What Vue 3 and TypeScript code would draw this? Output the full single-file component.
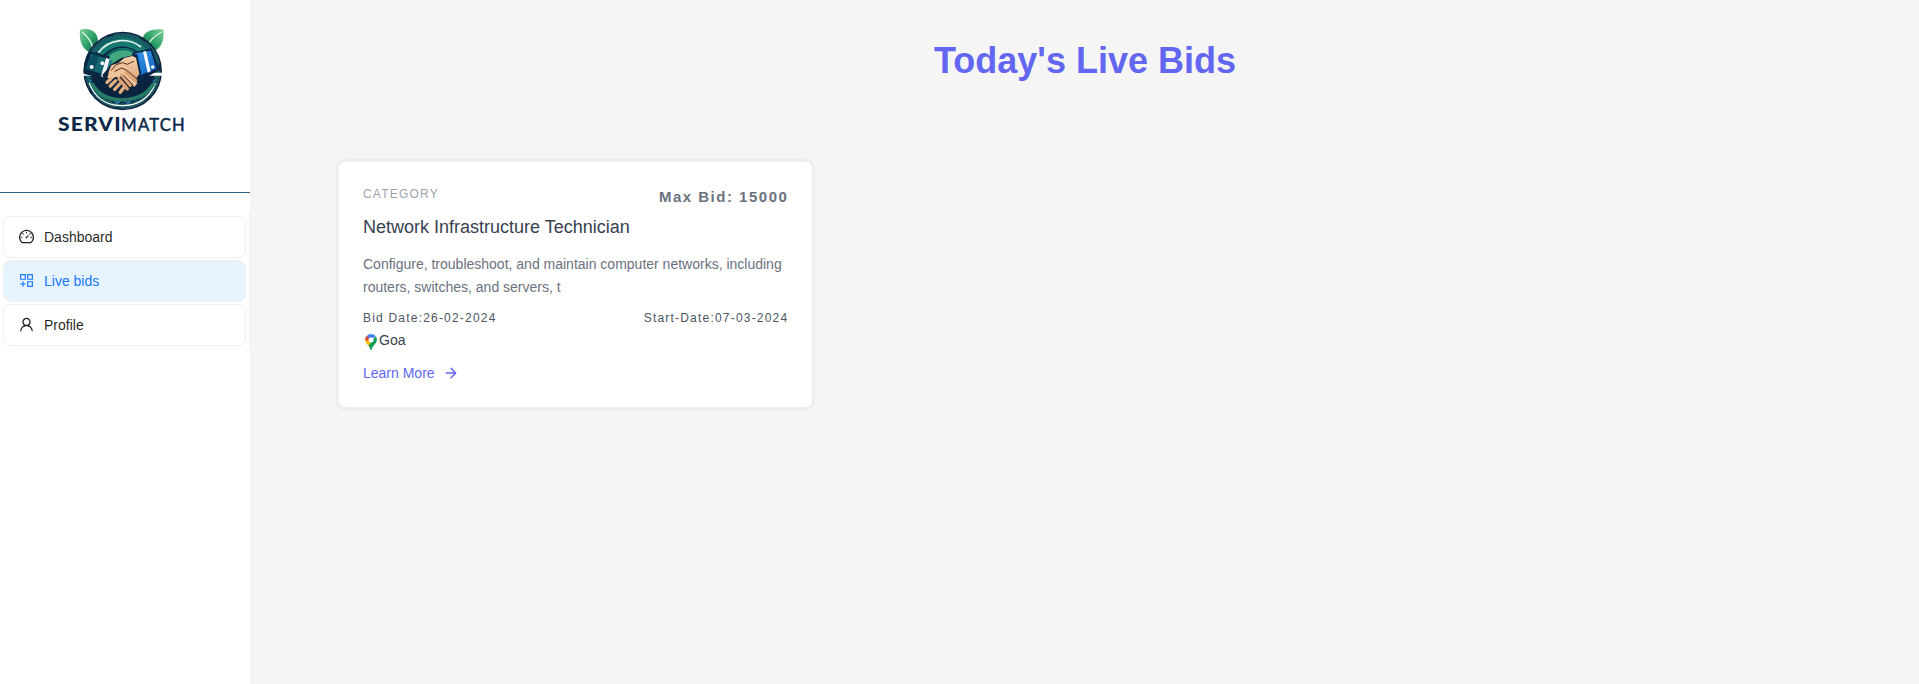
<script setup lang="ts">
interface MenuItem {
  key: string
  label: string
}

interface Bid {
  title: string
  description: string
  maxBid: number
  bidDate: string
  startDate: string
  location: string
}

const menu: MenuItem[] = [
  { key: 'dashboard', label: 'Dashboard' },
  { key: 'bids', label: 'Live bids' },
  { key: 'profile', label: 'Profile' },
]
const activeKey = 'bids'

const bids: Bid[] = [
  {
    title: 'Network Infrastructure Technician',
    description:
      'Configure, troubleshoot, and maintain computer networks, including routers, switches, and servers, t',
    maxBid: 15000,
    bidDate: '26-02-2024',
    startDate: '07-03-2024',
    location: 'Goa',
  },
]
</script>

<template>
  <div class="layout">
    <aside class="sider">
      <div class="brand">
        <svg class="logo" viewBox="0 0 435 360" width="145" height="120">
          <defs>
            <linearGradient id="leafL" x1="0" y1="0" x2="1" y2="1">
              <stop offset="0" stop-color="#7fd09a" />
              <stop offset=".5" stop-color="#2fa368" />
              <stop offset="1" stop-color="#0c5a4c" />
            </linearGradient>
            <linearGradient id="leafR" x1="1" y1="0" x2="0" y2="1">
              <stop offset="0" stop-color="#7fd09a" />
              <stop offset=".5" stop-color="#2fa368" />
              <stop offset="1" stop-color="#0c5a4c" />
            </linearGradient>
            <linearGradient id="ring" x1="0" y1="0" x2="1" y2="1">
              <stop offset="0" stop-color="#14626a" />
              <stop offset="1" stop-color="#1b5c58" />
            </linearGradient>
            <linearGradient id="cuff" x1="0" y1="0" x2="1" y2="1">
              <stop offset="0" stop-color="#3aa0ee" />
              <stop offset="1" stop-color="#0d58b8" />
            </linearGradient>
            <linearGradient id="skin" x1="0" y1="0" x2="0" y2="1">
              <stop offset="0" stop-color="#f5cfab" />
              <stop offset="1" stop-color="#dca57a" />
            </linearGradient>
          </defs>
          <path d="M90 29c28-7 53 3 54 35l-20 34c-28-9-37-34-34-69z" fill="url(#leafL)" />
          <path d="M97 37c18 14 28 28 32 50" fill="none" stroke="#e6f5e8" stroke-width="4" />
          <path d="M340 29c-40-5-64 10-63 36l31 30c26-9 36-35 32-66z" fill="url(#leafR)" />
          <path d="M335 36c-22 11-34 22-41 41" fill="none" stroke="#daf2df" stroke-width="4" />
          <circle cx="218" cy="153" r="118" fill="#0a2440" />
          <circle cx="218" cy="153" r="103" fill="none" stroke="url(#ring)" stroke-width="14" />
          <circle cx="218" cy="153" r="95" fill="none" stroke="#0b2c45" stroke-width="8" stroke-dasharray="11 8" />
          <circle cx="218" cy="153" r="112" fill="none" stroke="#3d7c83" stroke-width="2" stroke-dasharray="80 20" />
          <path d="M139 94a98 98 0 0 1 151-8l-18 17a76 76 0 0 0-115 6z" fill="#177a72" />
          <path d="M145 98a90 90 0 0 1 128-17" fill="none" stroke="#e8f4ef" stroke-width="5" />
          <path d="M162 120a65 65 0 0 1 98-22l-8 27-70 26z" fill="#41a880" />
          <path d="M168 112a64 64 0 0 1 89-12" fill="none" stroke="#0b6b64" stroke-width="7" />
          <path d="M118 188c15 45 51 68 97 69s84-21 101-67" fill="none" stroke="#f4f8f8" stroke-width="4" />
          <path d="M126 190c17 35 50 49 91 50 40-1 74-16 94-49" fill="none" stroke="#277a66" stroke-width="11" />
          <path d="M195 244l8 5 7-5M226 245l7 4 8-5M119 179l5 5M315 179l-5 5" fill="none" stroke="#357ec0" stroke-width="4" />
          <path d="M96 158h50l12 9H96zM282 158h58v9h-64z" fill="#fff" />
          <path d="M117 94l62 15-12 70-66-18 2-26z" fill="#092642" />
          <path d="M123 102l44 13-11 46-49-14z" fill="#176873" />
          <path d="M128 102l19 5-14 47-28-7z" fill="#0a4f61" />
          <path d="M168 113l14 6-14 57-15-7z" fill="#f8fafa" />
          <path d="M178 118l9 4-14 54-8-4z" fill="#257987" />
          <circle cx="157" cy="130" r="6" fill="#e9f6f6" />
          <circle cx="125" cy="141" r="6" fill="#fff" />
          <path d="M246 98l58-13 25 64-52 30-13-15z" fill="#0b2649" />
          <path d="M256 100l46-8 18 54-41 15-9 5z" fill="url(#cuff)" />
          <path d="M279 95l9-2 14 61-9 4z" fill="#f5fbff" />
          <path d="M254 102l10-2 13 66-9-3z" fill="#1462bc" />
          <circle cx="308" cy="141" r="5" fill="#fff" />
          <path d="M184 133l29-19 47-11 13 57-25 39-32 28-47-29-12-33z" fill="#0c243b" />
          <path d="M184 136l21-7 18-15 24-6 11 5 10 49-20 28-24-30-14-5-26 13-9-9z" fill="url(#skin)" />
          <path d="M181 143l-9 31 15 3 10-7 11 4 5-6 12 4 28 29 9-11-28-41-15-6-22 14-9-6 14-17z" fill="#f0c39b" />
          <path d="M171 187l12-11M181 198l16-16M194 208l16-17M211 217l10-14" fill="none" stroke="#e2ae83" stroke-width="10" stroke-linecap="round" />
          <path d="M216 166l25 30M228 157l29 25M207 176l25 31" fill="none" stroke="#dba276" stroke-width="10" stroke-linecap="round" />
          <path d="M184 151l14-17 20-6 14 5 19-9M195 154l19-10 15 6 34 28M222 167l26 27M211 174l26 27" fill="none" stroke="#542f23" stroke-width="3" stroke-linecap="round" />
          <text class="wordmark heavy" x="24" y="333" textLength="191" lengthAdjust="spacingAndGlyphs">SERVI</text>
          <text class="wordmark" x="214" y="333" textLength="194" lengthAdjust="spacingAndGlyphs">MATCH</text>
        </svg>
      </div>

      <nav class="menu">
        <a v-for="item in menu" :key="item.key" class="item" :class="{ active: item.key === activeKey }">
          <svg v-if="item.key === 'dashboard'" class="icon" viewBox="64 64 896 896" fill="currentColor">
            <path d="M924.8 385.6a446.7 446.7 0 00-96-142.4 446.7 446.7 0 00-142.4-96C631.1 123.8 572.5 112 512 112s-119.1 11.8-174.4 35.2a446.7 446.7 0 00-142.4 96 446.7 446.7 0 00-96 142.4C75.8 440.9 64 499.5 64 560c0 132.7 58.3 257.7 159.9 343.1l1.7 1.4c5.8 4.8 13.1 7.5 20.6 7.5h531.7c7.5 0 14.8-2.7 20.6-7.5l1.7-1.4C901.7 817.7 960 692.7 960 560c0-60.5-11.9-119.1-35.2-174.4zM761.4 836H262.6A371.12 371.12 0 01140 560c0-99.4 38.7-192.8 109-263 70.3-70.3 163.7-109 263-109 99.4 0 192.8 38.7 263 109 70.3 70.3 109 163.7 109 263 0 105.6-44.5 205.5-122.6 276zM623.5 421.5a8.03 8.03 0 00-11.3 0L527.7 506c-18.7-5-39.4-.2-54.1 14.5a55.95 55.95 0 000 79.2 55.95 55.95 0 0079.2 0 55.87 55.87 0 0014.5-54.1l84.5-84.5c3.1-3.1 3.1-8.2 0-11.3l-28.3-28.3zM490 320h44c4.4 0 8-3.6 8-8v-80c0-4.4-3.6-8-8-8h-44c-4.4 0-8 3.6-8 8v80c0 4.4 3.6 8 8 8zm260 218v44c0 4.4 3.6 8 8 8h80c4.4 0 8-3.6 8-8v-44c0-4.4-3.6-8-8-8h-80c-4.4 0-8 3.6-8 8zm12.7-197.2l-31.1-31.1a8.03 8.03 0 00-11.3 0l-56.6 56.6a8.03 8.03 0 000 11.3l31.1 31.1c3.1 3.1 8.2 3.1 11.3 0l56.6-56.6c3.1-3.1 3.1-8.2 0-11.3zm-458.6-31.1a8.03 8.03 0 00-11.3 0l-31.1 31.1a8.03 8.03 0 000 11.3l56.6 56.6c3.1 3.1 8.2 3.1 11.3 0l31.1-31.1c3.1-3.1 3.1-8.2 0-11.3l-56.6-56.6zM262 530h-80c-4.4 0-8 3.6-8 8v44c0 4.4 3.6 8 8 8h80c4.4 0 8-3.6 8-8v-44c0-4.4-3.6-8-8-8z" />
          </svg>
          <svg v-else-if="item.key === 'bids'" class="icon" viewBox="64 64 896 896" fill="currentColor">
            <path fill-rule="evenodd" d="M128 128h346v346H128zM196 196v210h210V196zM550 128h346v346H550zM618 196v210h210V196zM550 550h346v346H550zM618 618v210h210V618zM267 560h68v126h126v68H335v136h-68V754H118v-68h149z" />
          </svg>
          <svg v-else class="icon" viewBox="64 64 896 896" fill="currentColor">
            <path d="M858.5 763.6a374 374 0 00-80.6-119.5 375.63 375.63 0 00-119.5-80.6c-.4-.2-.8-.3-1.2-.5C719.5 518 760 444.7 760 362c0-137-111-248-248-248S264 225 264 362c0 82.7 40.5 156 102.8 201.1-.4.2-.8.3-1.2.5-44.8 18.9-85 46-119.5 80.6a375.63 375.63 0 00-80.6 119.5A371.7 371.7 0 00136 901.8a8 8 0 008 8.2h60c4.4 0 7.9-3.5 8-7.8 2-77.2 33-149.5 87.8-204.3 56.7-56.7 132-87.9 212.2-87.9s155.5 31.2 212.2 87.9C779 752.7 810 825 812 902.2c.1 4.4 3.6 7.8 8 7.8h60a8 8 0 008-8.2c-1-47.8-10.9-94.3-29.5-138.2zM512 534c-45.9 0-89.1-17.9-121.6-50.4S340 407.9 340 362c0-45.9 17.9-89.1 50.4-121.6S466.1 190 512 190s89.1 17.9 121.6 50.4S684 316.1 684 362c0 45.9-17.9 89.1-50.4 121.6S557.9 534 512 534z" />
          </svg>
          <span>{{ item.label }}</span>
        </a>
      </nav>
    </aside>

    <main class="content">
      <h1>Today's Live Bids</h1>
      <section class="grid">
        <article v-for="bid in bids" :key="bid.title" class="card">
          <div class="row top">
            <span class="category">CATEGORY</span>
            <span class="max">Max Bid: {{ bid.maxBid }}</span>
          </div>
          <h2>{{ bid.title }}</h2>
          <p>{{ bid.description }}</p>
          <div class="row dates">
            <span>Bid Date:{{ bid.bidDate }}</span>
            <span>Start-Date:{{ bid.startDate }}</span>
          </div>
          <div class="place">
            <svg class="pin" viewBox="0 0 12 16" width="12" height="16">
              <path d="M1.5 2.2A6 6 0 0 1 10.8 2.3L6 6z" fill="#4285f4" />
              <path d="M.1 5.4C0 8.5 2.2 10 4 12L10 4.5 6 6 2 4.5z" fill="#fbbc04" />
              <path d="M1.5 2A6 6 0 0 0 .1 6L3 6.8 5 4.5z" fill="#ea4335" />
              <path d="M10.8 2.3C13 5.5 11.6 8.3 9.4 10.7 7.7 12.5 7 14 6.7 15.5Q6 16.4 5.3 15.5C5 14 4.5 12.7 3.5 11.5z" fill="#0f9d58" />
              <circle cx="6" cy="5.9" r="2.5" fill="#fff" />
            </svg>
            <span>{{ bid.location }}</span>
          </div>
          <a class="more">
            Learn More
            <svg viewBox="0 0 24 24" width="16" height="16" fill="none" stroke="currentColor" stroke-width="2.2" stroke-linecap="round" stroke-linejoin="round">
              <path d="M5 12h14M12 5l7 7-7 7" />
            </svg>
          </a>
        </article>
      </section>
    </main>
  </div>
</template>

<style>
body {
  margin: 0;
  background: #f5f5f5;
}
</style>

<style scoped>
.layout {
  display: flex;
  height: 684px;
  overflow: hidden;
  font-family: "Liberation Sans", Arial, sans-serif;
  font-size: 14px;
}
.layout * {
  box-sizing: border-box;
}
.sider {
  width: 250px;
  flex: none;
  background: #fff;
}
.brand {
  height: 193px;
  padding: 20px 0 0 50px;
  border-bottom: 1px solid #2b5f86;
}
.logo {
  display: block;
}
.wordmark {
  font-family: Lato, sans-serif;
  font-size: 54px;
  font-weight: 400;
  letter-spacing: 4px;
  fill: #0c2748;
  stroke: #0c2748;
  stroke-width: 1.5px;
}
.wordmark.heavy {
  font-weight: 900;
  letter-spacing: 3px;
  stroke-width: 0;
}
.menu {
  display: flex;
  flex-direction: column;
  gap: 2px;
  height: 137px;
  margin-top: 19px;
  padding: 4px 3px;
  border-right: 1px solid #f0f0f0;
}
.item {
  display: flex;
  align-items: center;
  gap: 10px;
  flex: none;
  height: 42px;
  padding-left: 15px;
  border: 1px solid #efefef;
  border-radius: 8px;
  color: rgba(0, 0, 0, 0.88);
}
.item.active {
  background: #e6f4ff;
  color: #1677ff;
}
.icon {
  width: 15px;
  height: 15px;
  margin-top: -1px;
}
.content {
  flex: 1;
  background: #f5f5f5;
}
h1 {
  margin: 41px 0 0;
  padding-left: 1px;
  font-size: 36px;
  line-height: 40px;
  text-align: center;
  color: #6366f1;
}
.grid {
  display: grid;
  grid-template-columns: repeat(3, 477.33px);
  margin: 79px 0 0 87px;
}
.card {
  height: 249px;
  padding: 24px;
  border: 2px solid #efeff0;
  border-radius: 8px;
  background: #fff;
  box-shadow: 0 0 2px rgba(0, 0, 0, 0.12);
}
.row {
  display: flex;
  justify-content: space-between;
}
.top {
  height: 27px;
}
.category {
  font-size: 12px;
  line-height: 16px;
  letter-spacing: 1.2px;
  color: #9ca3af;
}
.max {
  font-size: 15px;
  line-height: 22px;
  font-weight: 700;
  letter-spacing: 1.5px;
  color: #6b7280;
}
h2 {
  margin: 0 0 12px;
  font-size: 18px;
  line-height: 28px;
  font-weight: 400;
  color: #374151;
}
p {
  margin: 0 -1px 11px 0;
  line-height: 22.75px;
  color: #6b7280;
}
.dates {
  font-size: 12px;
  line-height: 16px;
  letter-spacing: 1.2px;
  color: #4b5563;
}
.place {
  display: flex;
  align-items: center;
  height: 28px;
  padding-left: 2px;
  color: #374151;
}
.pin {
  margin: 5px 2px 0 0;
}
.more {
  display: flex;
  align-items: center;
  gap: 8px;
  height: 22px;
  margin-top: 8px;
  color: #6366f1;
}
</style>
